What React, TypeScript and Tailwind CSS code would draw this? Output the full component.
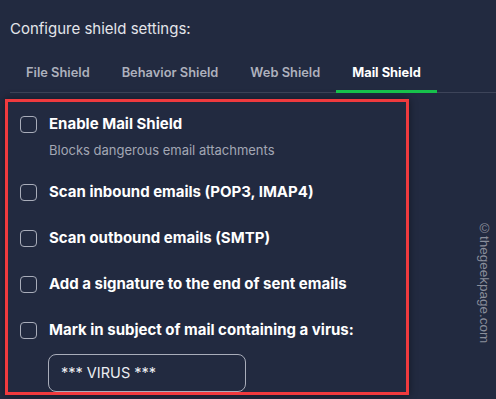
const tabs = ['File Shield', 'Behavior Shield', 'Web Shield', 'Mail Shield']

const options = [
  'Scan inbound emails (POP3, IMAP4)',
  'Scan outbound emails (SMTP)',
  'Add a signature to the end of sent emails',
]

function Checkbox() {
  return <span className="w-[17px] h-[17px] shrink-0 rounded-[4px] border-[1.5px] border-[#a9adba]" />
}

export default function App() {
  return (
    <div className="relative w-[496px] h-[399px] overflow-hidden bg-[#222a40] font-['Inter',sans-serif]">
      {/* Heading */}
      <p className="pl-[10px] pt-[17px] text-[15px] leading-6 text-[#e4e5ea]">Configure shield settings:</p>

      {/* Tabs */}
      <div className="ml-[10px] mt-[12px] flex border-b border-[#3d4459]">
        {tabs.map((t, i) => (
          <div
            key={t}
            className={
              i === 3
                ? 'px-4 pt-[10px] pb-[8px] -mb-px text-[12.85px] font-bold text-white border-b-[3px] border-[#17c14b]'
                : 'px-4 pt-[10px] pb-[10px] text-[12.85px] font-semibold text-[#aeb1bd]'
            }
          >
            {t}
          </div>
        ))}
      </div>

      {/* Mail shield options, highlighted */}
      <div className="ml-[5px] mt-[6px] w-[404px] h-[296px] overflow-hidden border-[3px] border-[#f03a3e] shadow-[0_0_8px_rgba(0,0,0,0.45)] pl-3 pt-[12px] flex flex-col">
        <label className="h-5 flex items-center gap-3">
          <Checkbox />
          <span className="text-[15px] font-bold text-white">Enable Mail Shield</span>
        </label>
        <p className="mt-[7px] pl-[29px] text-[13px] leading-[18px] text-[#a3a7b4]">Blocks dangerous email attachments</p>

        {options.map((o, i) => (
          <label key={o} className={i === 0 ? 'mt-[23px] h-5 flex items-center gap-3' : 'mt-[26px] h-5 flex items-center gap-3'}>
            <Checkbox />
            <span className="text-[15px] font-bold text-white">{o}</span>
          </label>
        ))}

        <label className="mt-[26px] h-5 flex items-center gap-3">
          <Checkbox />
          <span className="text-[15px] font-bold text-white">Mark in subject of mail containing a virus:</span>
        </label>
        <div className="ml-[28px] mt-[14px] w-[198px] h-[38px] shrink-0 rounded-[8px] border border-[#a9adba] pl-3 flex items-center text-[14.5px] text-[#eceef2]">
          *** VIRUS ***
        </div>
      </div>

      {/* Watermark */}
      <span className="absolute right-[2px] top-[221px] [writing-mode:vertical-rl] text-[13.5px] font-['Liberation_Sans',sans-serif] text-[#8b8f9c]">
        ©thegeekpage.com
      </span>
    </div>
  )
}
